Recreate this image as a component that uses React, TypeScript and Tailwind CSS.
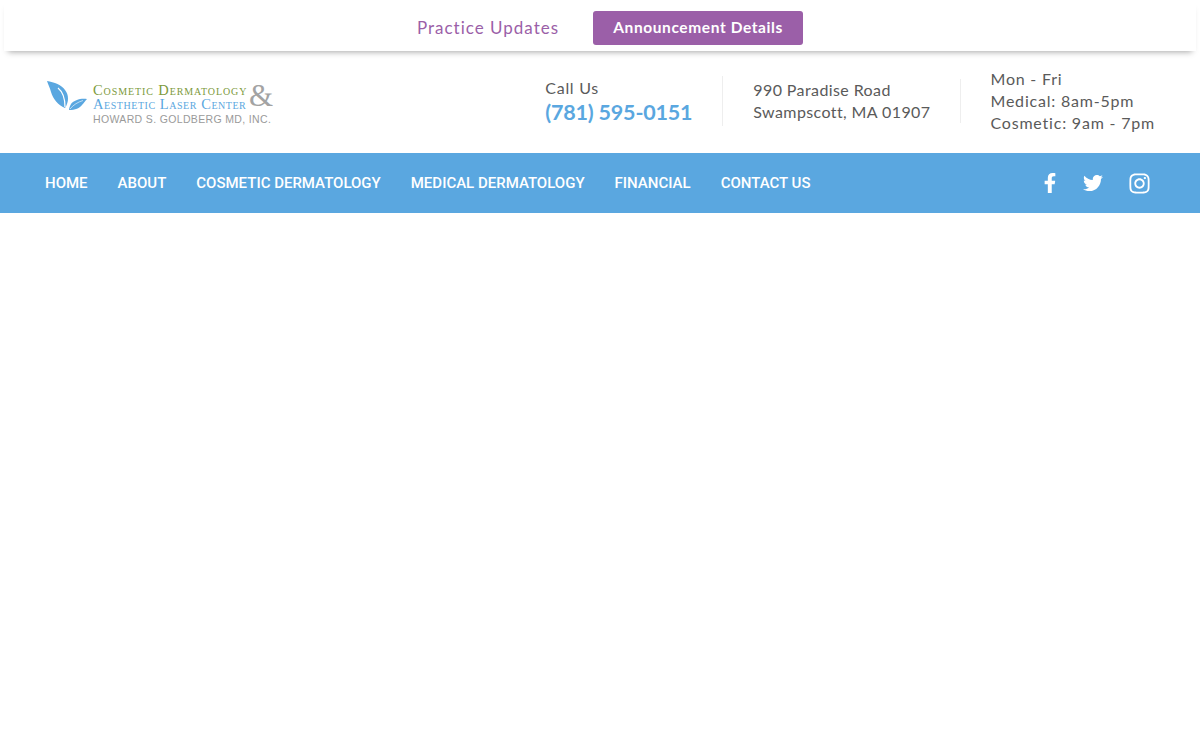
import React from "react";
import { FaFacebookF, FaTwitter, FaInstagram } from "react-icons/fa";

const navItems = [
  "HOME",
  "ABOUT",
  "COSMETIC DERMATOLOGY",
  "MEDICAL DERMATOLOGY",
  "FINANCIAL",
  "CONTACT US",
];

function Logo() {
  return (
    <div className="flex items-start w-[228px] h-[48px] ml-[45px]">
      <svg width="44" height="32" viewBox="0 0 44 32" className="mt-[3px] shrink-0">
        <path d="M2 1 C9 2 17 5 20 10 C24 15 24 22 20 28 C13 25 8 19 6 12 C5 8 3 4 2 1 Z" fill="#5aa7e0" />
        <path d="M13 8 C18 12 20 18 20 27" stroke="#fff" strokeWidth="1.2" fill="none" />
        <path d="M42 19 C36 18 29 20 26 24 C25 26 24 28 24 30 C30 30 35 28 37 25 C39 23 40 21 42 19 Z" fill="#5aa7e0" />
        <path d="M38 20.5 C33 22 28 25 25 29" stroke="#fff" strokeWidth="0.6" fill="none" />
      </svg>
      <div className="relative ml-[4px] mt-[6px] flex flex-col">
        <span className="font-['Liberation_Serif',serif] [font-variant:small-caps] text-[14.5px] leading-[14px] tracking-[0.9px] text-[#7d9a3c] whitespace-nowrap">
          Cosmetic Dermatology
        </span>
        <span className="font-['Liberation_Serif',serif] [font-variant:small-caps] text-[14.5px] leading-[14px] tracking-[0.55px] text-[#5aa7e0] whitespace-nowrap">
          Aesthetic Laser Center
        </span>
        <span className="font-['Liberation_Sans',sans-serif] text-[10.5px] leading-[14px] mt-[1px] text-[#9a9a9a] whitespace-nowrap tracking-[0.35px]">
          HOWARD S. GOLDBERG MD, INC.
        </span>
        <span className="absolute left-[156px] top-[-3px] font-['Liberation_Serif',serif] text-[31px] leading-[32px] text-[#a3a3a3]">
          &amp;
        </span>
      </div>
    </div>
  );
}

export default function App() {
  return (
    <div className="min-h-[740px] bg-white font-['Lato',sans-serif] text-[#5a5a5a]">
      <div className="mx-[4px] flex h-[51px] items-center justify-center pl-[20px] pt-[5px] shadow-[0_5px_6px_-4px_rgba(0,0,0,0.35)]">
        <span className="text-[17px] tracking-[1px] text-[#9b5fa8]">Practice Updates</span>
        <button className="ml-[34px] h-[34px] w-[210px] rounded-[3px] bg-[#9b5fa8] text-[15.5px] font-bold tracking-[0.6px] text-white">
          Announcement Details
        </button>
      </div>

      <header className="flex h-[102px] items-center justify-between pb-[2px] pr-[45px]">
        <Logo />
        <div className="flex items-center text-[16px] leading-[22px] tracking-[0.3px]">
          <div className="flex h-[50px] flex-col justify-center border-r border-[#eee] pt-[2px] pr-[30px]">
            <span className="leading-[21px] tracking-[0.7px]">Call Us</span>
            <span className="text-[21.5px] font-bold leading-[29px] tracking-[-0.2px] text-[#5aa7e0]">(781) 595-0151</span>
          </div>
          <div className="flex flex-col border-r border-[#eee] px-[30px] tracking-[0.4px]">
            <span>990 Paradise Road</span>
            <span>Swampscott, MA 01907</span>
          </div>
          <div className="flex flex-col pl-[29px] tracking-[0.8px]">
            <span>Mon - Fri</span>
            <span>Medical: 8am-5pm</span>
            <span>Cosmetic: 9am - 7pm</span>
          </div>
        </div>
      </header>

      <nav className="flex h-[60px] items-center justify-between bg-[#5aa7e0] pl-[45px] pr-[49px]">
        <ul className="flex gap-[30px] font-['Roboto',sans-serif] text-[15px] font-medium text-white">
          {navItems.map((item) => (
            <li key={item}>{item}</li>
          ))}
        </ul>
        <div className="flex items-center text-white">
          <FaFacebookF size={20} className="mr-[23px]" />
          <FaTwitter size={20} className="mr-[25px]" />
          <FaInstagram size={23} />
        </div>
      </nav>
    </div>
  );
}
